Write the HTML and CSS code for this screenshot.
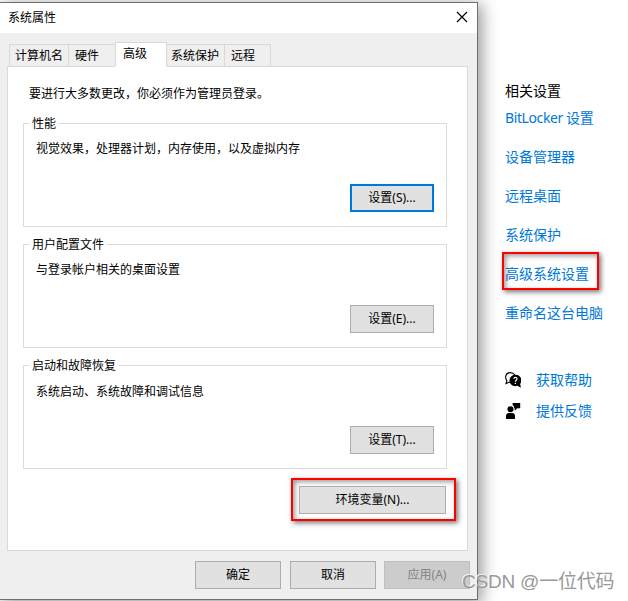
FILE: index.html
```
<!DOCTYPE html>
<html lang="zh-CN">
<head>
<meta charset="utf-8">
<title>系统属性</title>
<link rel="stylesheet" href="styles.css">
</head>
<body>
<div class="screen">
  <section class="window">
    <header class="titlebar">
      <span>系统属性</span>
      <svg class="close" width="12" height="12" viewBox="0 0 12 12"><path d="M1 1L11 11M11 1L1 11" stroke="#000" stroke-width="1.2" fill="none"/></svg>
    </header>
    <nav class="tabs">
      <span class="tab t1">计算机名</span>
      <span class="tab t2">硬件</span>
      <span class="tab t3 active">高级</span>
      <span class="tab t4">系统保护</span>
      <span class="tab t5">远程</span>
    </nav>
    <main class="panel">
      <p class="notice">要进行大多数更改，你必须作为管理员登录。</p>
      <div class="group">
        <span class="legend">性能</span>
        <p class="desc">视觉效果，处理器计划，内存使用，以及虚拟内存</p>
        <button class="btn focus">设置(S)...</button>
      </div>
      <div class="group">
        <span class="legend">用户配置文件</span>
        <p class="desc">与登录帐户相关的桌面设置</p>
        <button class="btn">设置(E)...</button>
      </div>
      <div class="group">
        <span class="legend">启动和故障恢复</span>
        <p class="desc last">系统启动、系统故障和调试信息</p>
        <button class="btn">设置(T)...</button>
      </div>
      <div class="env mark"><button class="btn">环境变量(N)...</button></div>
    </main>
    <footer class="actions">
      <button class="btn">确定</button>
      <button class="btn">取消</button>
      <button class="btn disabled">应用(A)</button>
    </footer>
  </section>
  <aside class="side">
    <h2>相关设置</h2>
    <a class="latin">BitLocker 设置</a>
    <a>设备管理器</a>
    <a>远程桌面</a>
    <a>系统保护</a>
    <a class="marked">高级系统设置<i class="mark ring"></i></a>
    <a>重命名这台电脑</a>
    <div class="help">
      <svg width="16" height="16" viewBox="0 0 16 16"><path d="M5 10L1 11.600L1.900 8.700C-.6 5.500 .8 .6 5.200 .6C7.500 .6 9 1.600 9.800 3" fill="none" stroke="#000" stroke-width="1.100"/><path d="M10.300 2.700a5.700 5.700 0 1 0 2 11L16 15.800L15.100 12A5.700 5.700 0 0 0 10.300 2.700Z"/><path d="M8.800 6.800C8.900 4.800 12 4.900 12 6.800C12 8.200 10.400 8.200 10.400 9.700M10.400 10.800V12.100" fill="none" stroke="#fff" stroke-width="1.200"/></svg>
      <a>获取帮助</a>
    </div>
    <div class="help">
      <svg width="16" height="16" viewBox="0 0 16 16"><circle cx="5.500" cy="6.200" r="3"/><path d="M1 15.900V13Q1 10 4 10H7Q10 10 10 13V15.900ZM7.600 0H15.200V5.300H12.300L9.700 7.800V5.300H9.200Q9.200 3 7.600 2Z"/></svg>
      <a>提供反馈</a>
    </div>
  </aside>
  <div class="watermark">CSDN @一位代码</div>
</div>
</body>
</html>
```
FILE: styles.css
```
* { box-sizing: border-box; }
body {
  margin: 0;
  background: #fff;
  color: #000;
  font: 12px/16px "Noto Sans", "Noto Sans CJK SC", sans-serif;
}
p, h2 { margin: 0; }
.screen {
  position: relative;
  display: flex;
  width: 628px;
  height: 601px;
  overflow: hidden;
  white-space: nowrap;
}
.window {
  display: flex;
  flex-direction: column;
  flex: none;
  width: 478px;
  height: 598px;
  margin-top: 2px;
  border: 1px solid #6e6e6e;
  border-left: 0;
  background: #efefef;
  box-shadow: 3px 3px 15px 1px rgba(0, 0, 0, .4);
}
.titlebar {
  display: flex;
  align-items: center;
  justify-content: space-between;
  height: 30px;
  padding: 0 9px 0 8px;
  background: #fff;
}
.close { margin-top: -2px; }
.tabs {
  display: flex;
  align-items: flex-end;
  height: 34px;
  margin: 0 0 -1px 9px;
  z-index: 1;
}
.tab {
  height: 23px;
  padding-left: 6px;
  border: 1px solid #d9d9d9;
  border-right: 0;
  line-height: 22px;
}
.t1 { width: 59px; padding-left: 5px; }
.t2 { width: 47px; }
.t3 { width: 52px; padding-left: 7px; }
.t4 { width: 57px; padding-left: 4px; border-left: 0; }
.t5 { width: 47px; padding-left: 6px; border-right: 1px solid #d9d9d9; }
.tab.active {
  height: 25px;
  background: #fff;
  border-right: 1px solid #d9d9d9;
  border-bottom-color: #fff;
}
.panel {
  display: flex;
  flex-direction: column;
  width: 461px;
  height: 485px;
  margin-left: 7px;
  padding: 19px 20px 0 15px;
  border: 1px solid #d9d9d9;
  background: #fff;
}
.notice { padding-left: 6px; height: 37px; }
.group {
  display: flex;
  flex-direction: column;
  align-items: flex-start;
  height: 104px;
  margin-bottom: 17px;
  padding: 0 12px 14px 5px;
  border: 1px solid #dcdcdc;
}
.legend {
  margin-top: -8px;
  padding: 0 3px;
  background: #fff;
}
.desc { margin: 9px 0 0 7px; }
.desc.last { margin-top: 10px; }
.btn {
  height: 28px;
  padding: 0;
  border: 1px solid #adadad;
  background: #e1e1e1;
  color: #000;
  font: inherit;
}
.group .btn { width: 84px; margin-top: auto; margin-left: auto; }
.btn.focus { border: 2px solid #0078d7; }
.mark {
  border: 2px solid #f00;
  box-shadow: 2px 2px 5px rgba(0, 0, 0, .55), inset 2px 2px 5px rgba(0, 0, 0, .4);
}
.env {
  width: 165px;
  height: 43px;
  margin: -8px -9px 0 auto;
  padding: 6px;
}
.env .btn { display: block; width: 147px; }
.actions {
  display: flex;
  gap: 9px;
  justify-content: flex-end;
  padding: 10px 7px 0 0;
}
.actions .btn { width: 86px; }
.actions .btn.disabled { margin-left: -1px; border-color: #bfbfbf; background: #ccc; color: #838383; }
.side {
  display: flex;
  flex-direction: column;
  align-items: flex-start;
  padding: 81px 0 0 27px;
  font-size: 14px;
  line-height: 20px;
}
.side h2 { margin-bottom: 7px; font-size: 14px; font-weight: 400; }
.side a { color: #0078d7; }
.side > a { margin-bottom: 19px; }
.latin { letter-spacing: -.4px; }
.marked { position: relative; }
.ring {
  position: absolute;
  left: -3px;
  top: -12px;
  width: 97px;
  height: 38px;
}
.help {
  display: flex;
  align-items: center;
  gap: 15px;
  margin-bottom: 11px;
}
.side > a + .help { margin-top: 28px; }
.watermark {
  position: absolute;
  left: 462px;
  top: 568px;
  color: #999;
  font: 19px/28px "Liberation Sans", "Noto Sans CJK SC", sans-serif;
  letter-spacing: -.2px;
  text-shadow: -1px -1px 0 rgba(255, 255, 255, .8);
}
```
